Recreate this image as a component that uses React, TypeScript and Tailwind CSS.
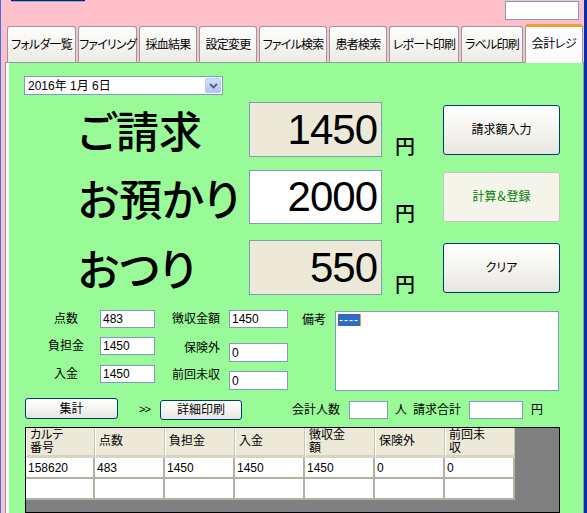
import React from "react";

const tabs: { label: string; cls: string }[] = [
  { label: "フォルダ一覧", cls: "w-[69px]" },
  { label: "ファイリング", cls: "w-[59px]" },
  { label: "採血結果", cls: "w-[58px]" },
  { label: "設定変更", cls: "w-[58px]" },
  { label: "ファイル検索", cls: "w-[68px]" },
  { label: "患者検索", cls: "w-[58px]" },
  { label: "レポート印刷", cls: "w-[70px]" },
  { label: "ラベル印刷", cls: "w-[62px]" },
];

function Box({ cls, children }: { cls: string; children?: React.ReactNode }) {
  return (
    <div className={`shrink-0 border border-[#7f9db9] bg-white flex items-center pl-[2px] text-[12px] leading-none ${cls}`}>
      {children}
    </div>
  );
}

function XPButton({ cls, children, disabled }: { cls: string; children: React.ReactNode; disabled?: boolean }) {
  return (
    <div
      className={`shrink-0 flex items-center justify-center rounded-[3px] border text-[12px] ${
        disabled
          ? "border-[#c9c7ba] bg-[#f5f4ea] text-[#008000]"
          : "border-[#003c74] bg-gradient-to-b from-[#ffffff] via-[#f5f4f0] to-[#e6e5df] text-black"
      } ${cls}`}
    >
      {children}
    </div>
  );
}

const headers = [
  { t: ["カルテ", "番号"], cls: "w-[69px]" },
  { t: ["点数"], cls: "w-[70px]" },
  { t: ["負担金"], cls: "w-[70px]" },
  { t: ["入金"], cls: "w-[70px]" },
  { t: ["徴収金", "額"], cls: "w-[70px]" },
  { t: ["保険外"], cls: "w-[70px]" },
  { t: ["前回未", "収"], cls: "w-[70px]" },
];

const rows = [
  ["158620", "483", "1450", "1450", "1450", "0", "0"],
  ["", "", "", "", "", "", ""],
];

export default function App() {
  return (
    <div className="w-[587px] h-[513px] overflow-hidden bg-[#ffc0cb] border-l border-l-[#3a6ee8] border-r-[3px] border-r-[#0b2fa8] flex flex-col font-['Liberation_Sans','Noto_Sans_CJK_JP',sans-serif] [font-feature-settings:'palt'] text-black">
      {/* top strip */}
      <div className="h-[24px] flex justify-between items-start shrink-0">
        <div className="ml-[10px] w-[74px] h-[2px] bg-[#0a246a] border-b border-[#8ea6d8]" />
        <div className="mt-[1px] mr-[5px] w-[74px] h-[19px] bg-white border border-[#7f9db9]" />
      </div>

      {/* tabs */}
      <div className="h-[38px] flex items-end pl-[6px] gap-[2px] shrink-0 relative z-10">
        {tabs.map((t) => (
          <div
            key={t.label}
            className={`${t.cls} shrink-0 h-[36px] rounded-t-[3px] border border-b-0 border-[#919b9c] bg-gradient-to-b from-[#fefefe] to-[#ecebe5] flex items-center justify-center text-[12px] tracking-[-0.8px] whitespace-nowrap`}
          >
            {t.label}
          </div>
        ))}
        <div className="w-[58px] shrink-0 h-[39px] -mb-[1px] rounded-t-[3px] border-x border-[#919b9c] border-t-[3px] border-t-[#f0a030] bg-[#fcfcfe] flex items-center justify-center text-[12px] tracking-[-0.5px] pb-[3px]">
          会計レジ
        </div>
      </div>

      {/* panel */}
      <div className="flex-1 ml-[4px] border-l border-t border-r border-[#919b9c] bg-[#fcfcfe] pl-[3px] flex">
        <div className="flex-1 bg-[#98fb98] flex flex-col">
          {/* date picker */}
          <div className="shrink-0 mt-[13px] ml-[15px] w-[199px] h-[19px] border border-[#7f9db9] bg-white flex items-center justify-between">
            <span className="pl-[3px] text-[12px] leading-none">2016年 1月 6日</span>
            <div className="w-[16px] h-[15px] mr-[1px] rounded-[2px] border border-[#b9c9ef] bg-gradient-to-b from-[#d4e0fb] to-[#aec4f4] flex items-center justify-center">
              <svg width="9" height="6" viewBox="0 0 9 6">
                <path d="M1 1 L4.5 4.5 L8 1" stroke="#4d6185" strokeWidth="1.8" fill="none" />
              </svg>
            </div>
          </div>

          {/* big rows */}
          {[
            { label: "ご請求", val: "1450", bg: "bg-[#ece9d8]", mt: "mt-[7px]", h: "h-[55px]", btn: "請求額入力", dis: false },
            { label: "お預かり", val: "2000", bg: "bg-white", mt: "mt-[13px]", h: "h-[54px]", btn: "計算＆登録", dis: true },
            { label: "おつり", val: "550", bg: "bg-[#ece9d8]", mt: "mt-[16px]", h: "h-[55px]", btn: "クリア", dis: false },
          ].map((r) => (
            <div key={r.label} className={`shrink-0 flex ${r.mt} ${r.h}`}>
              <div className="w-[240px] shrink-0 pl-[69px] flex items-center text-[43px] font-medium leading-none whitespace-nowrap font-['Noto_Sans_CJK_JP',sans-serif]">
                {r.label}
              </div>
              <div className={`w-[133px] shrink-0 ${r.bg} border border-[#7f9db9] flex items-center justify-end pr-[4px] text-[42px] leading-none tracking-[-1px]`}>
                {r.val}
              </div>
              <div className="ml-[13px] shrink-0 self-end mb-[1px] text-[20px] font-medium leading-none font-['Noto_Sans_CJK_JP',sans-serif]">円</div>
              <XPButton cls="ml-[28px] w-[117px] h-[50px] self-center" disabled={r.dis}>
                {r.btn}
              </XPButton>
            </div>
          ))}

          {/* small fields */}
          <div className="shrink-0 mt-[15px] h-[81px] flex text-[12px] leading-none">
            <div className="ml-[31px] shrink-0 flex flex-col">
              {[
                ["点数", "483", ""],
                ["負担金", "1450", "mt-[9px]"],
                ["入金", "1450", "mt-[10px]"],
              ].map(([l, v, m]) => (
                <div key={l} className={`flex items-center h-[18px] ${m}`}>
                  <div className="w-[52px] shrink-0 text-center">{l}</div>
                  <Box cls="ml-[8px] w-[55px] h-[18px]">{v}</Box>
                </div>
              ))}
            </div>
            <div className="ml-[10px] shrink-0 flex flex-col">
              <div className="flex items-center h-[18px]">
                <div className="w-[55px] shrink-0 text-right">徴収金額</div>
                <Box cls="ml-[9px] w-[59px] h-[18px]">1450</Box>
              </div>
              <div className="flex items-start mt-[15px]">
                <div className="w-[55px] shrink-0 text-right -mt-[1px]">保険外</div>
                <Box cls="ml-[9px] w-[59px] h-[19px]">0</Box>
              </div>
              <div className="flex items-start mt-[9px]">
                <div className="w-[55px] shrink-0 text-right -mt-[2px]">前回未収</div>
                <Box cls="ml-[9px] w-[59px] h-[19px]">0</Box>
              </div>
            </div>
            <div className="ml-[14px] shrink-0 mt-[4px] w-[33px]">備考</div>
            <div className="shrink-0 mt-[1px] w-[224px] h-[80px] border border-[#7f9db9] bg-white p-[2px]">
              <div className="flex items-stretch h-[12px]">
                <span className="bg-[#316ac5] text-white text-[12px] leading-[12px] px-[1px] tracking-[1px]">----</span>
                <span className="w-[1px] bg-[#e0a020]" />
              </div>
            </div>
          </div>

          {/* button row */}
          <div className="shrink-0 mt-[7px] h-[22px] flex items-start text-[12px] leading-none">
            <XPButton cls="ml-[16px] w-[93px] h-[21px]">集計</XPButton>
            <div className="ml-[21px] shrink-0 mt-[6px] w-[12px] text-[11px] tracking-[-1px]">&gt;&gt;</div>
            <XPButton cls="ml-[9px] mt-[2px] w-[82px] h-[20px]">詳細印刷</XPButton>
            <div className="ml-[50px] shrink-0 mt-[6px]">会計人数</div>
            <Box cls="ml-[9px] mt-[3px] w-[39px] h-[18px]" />
            <div className="ml-[7px] shrink-0 mt-[6px]">人</div>
            <div className="ml-[6px] shrink-0 mt-[6px]">請求合計</div>
            <Box cls="ml-[8px] mt-[3px] w-[54px] h-[18px]" />
            <div className="ml-[8px] shrink-0 mt-[6px]">円</div>
          </div>

          {/* table */}
          <div className="mt-[7px] ml-[16px] w-[535px] flex-1 border border-black bg-[#808080] text-[12px]">
            <div className="flex h-[30px]">
              {headers.map((h, i) => (
                <div
                  key={i}
                  className={`${h.cls} shrink-0 h-full bg-[#ece9d8] border-r border-r-[#c7c5b2] border-l border-l-white border-b-[3px] border-b-[#d8d4c4] flex flex-col justify-center pl-[3px] leading-[13px]`}
                >
                  {h.t.map((x) => (
                    <span key={x} className="block h-[13px]">{x}</span>
                  ))}
                </div>
              ))}
            </div>
            {rows.map((r, ri) => (
              <div key={ri} className="flex h-[21px]">
                {r.map((c, ci) => (
                  <div
                    key={ci}
                    className={`${headers[ci].cls} shrink-0 h-full bg-white border-r-2 border-b-2 border-[#b3b0a4] flex items-center pl-[2px] leading-none`}
                  >
                    {c}
                  </div>
                ))}
              </div>
            ))}
          </div>
        </div>
      </div>
    </div>
  );
}
